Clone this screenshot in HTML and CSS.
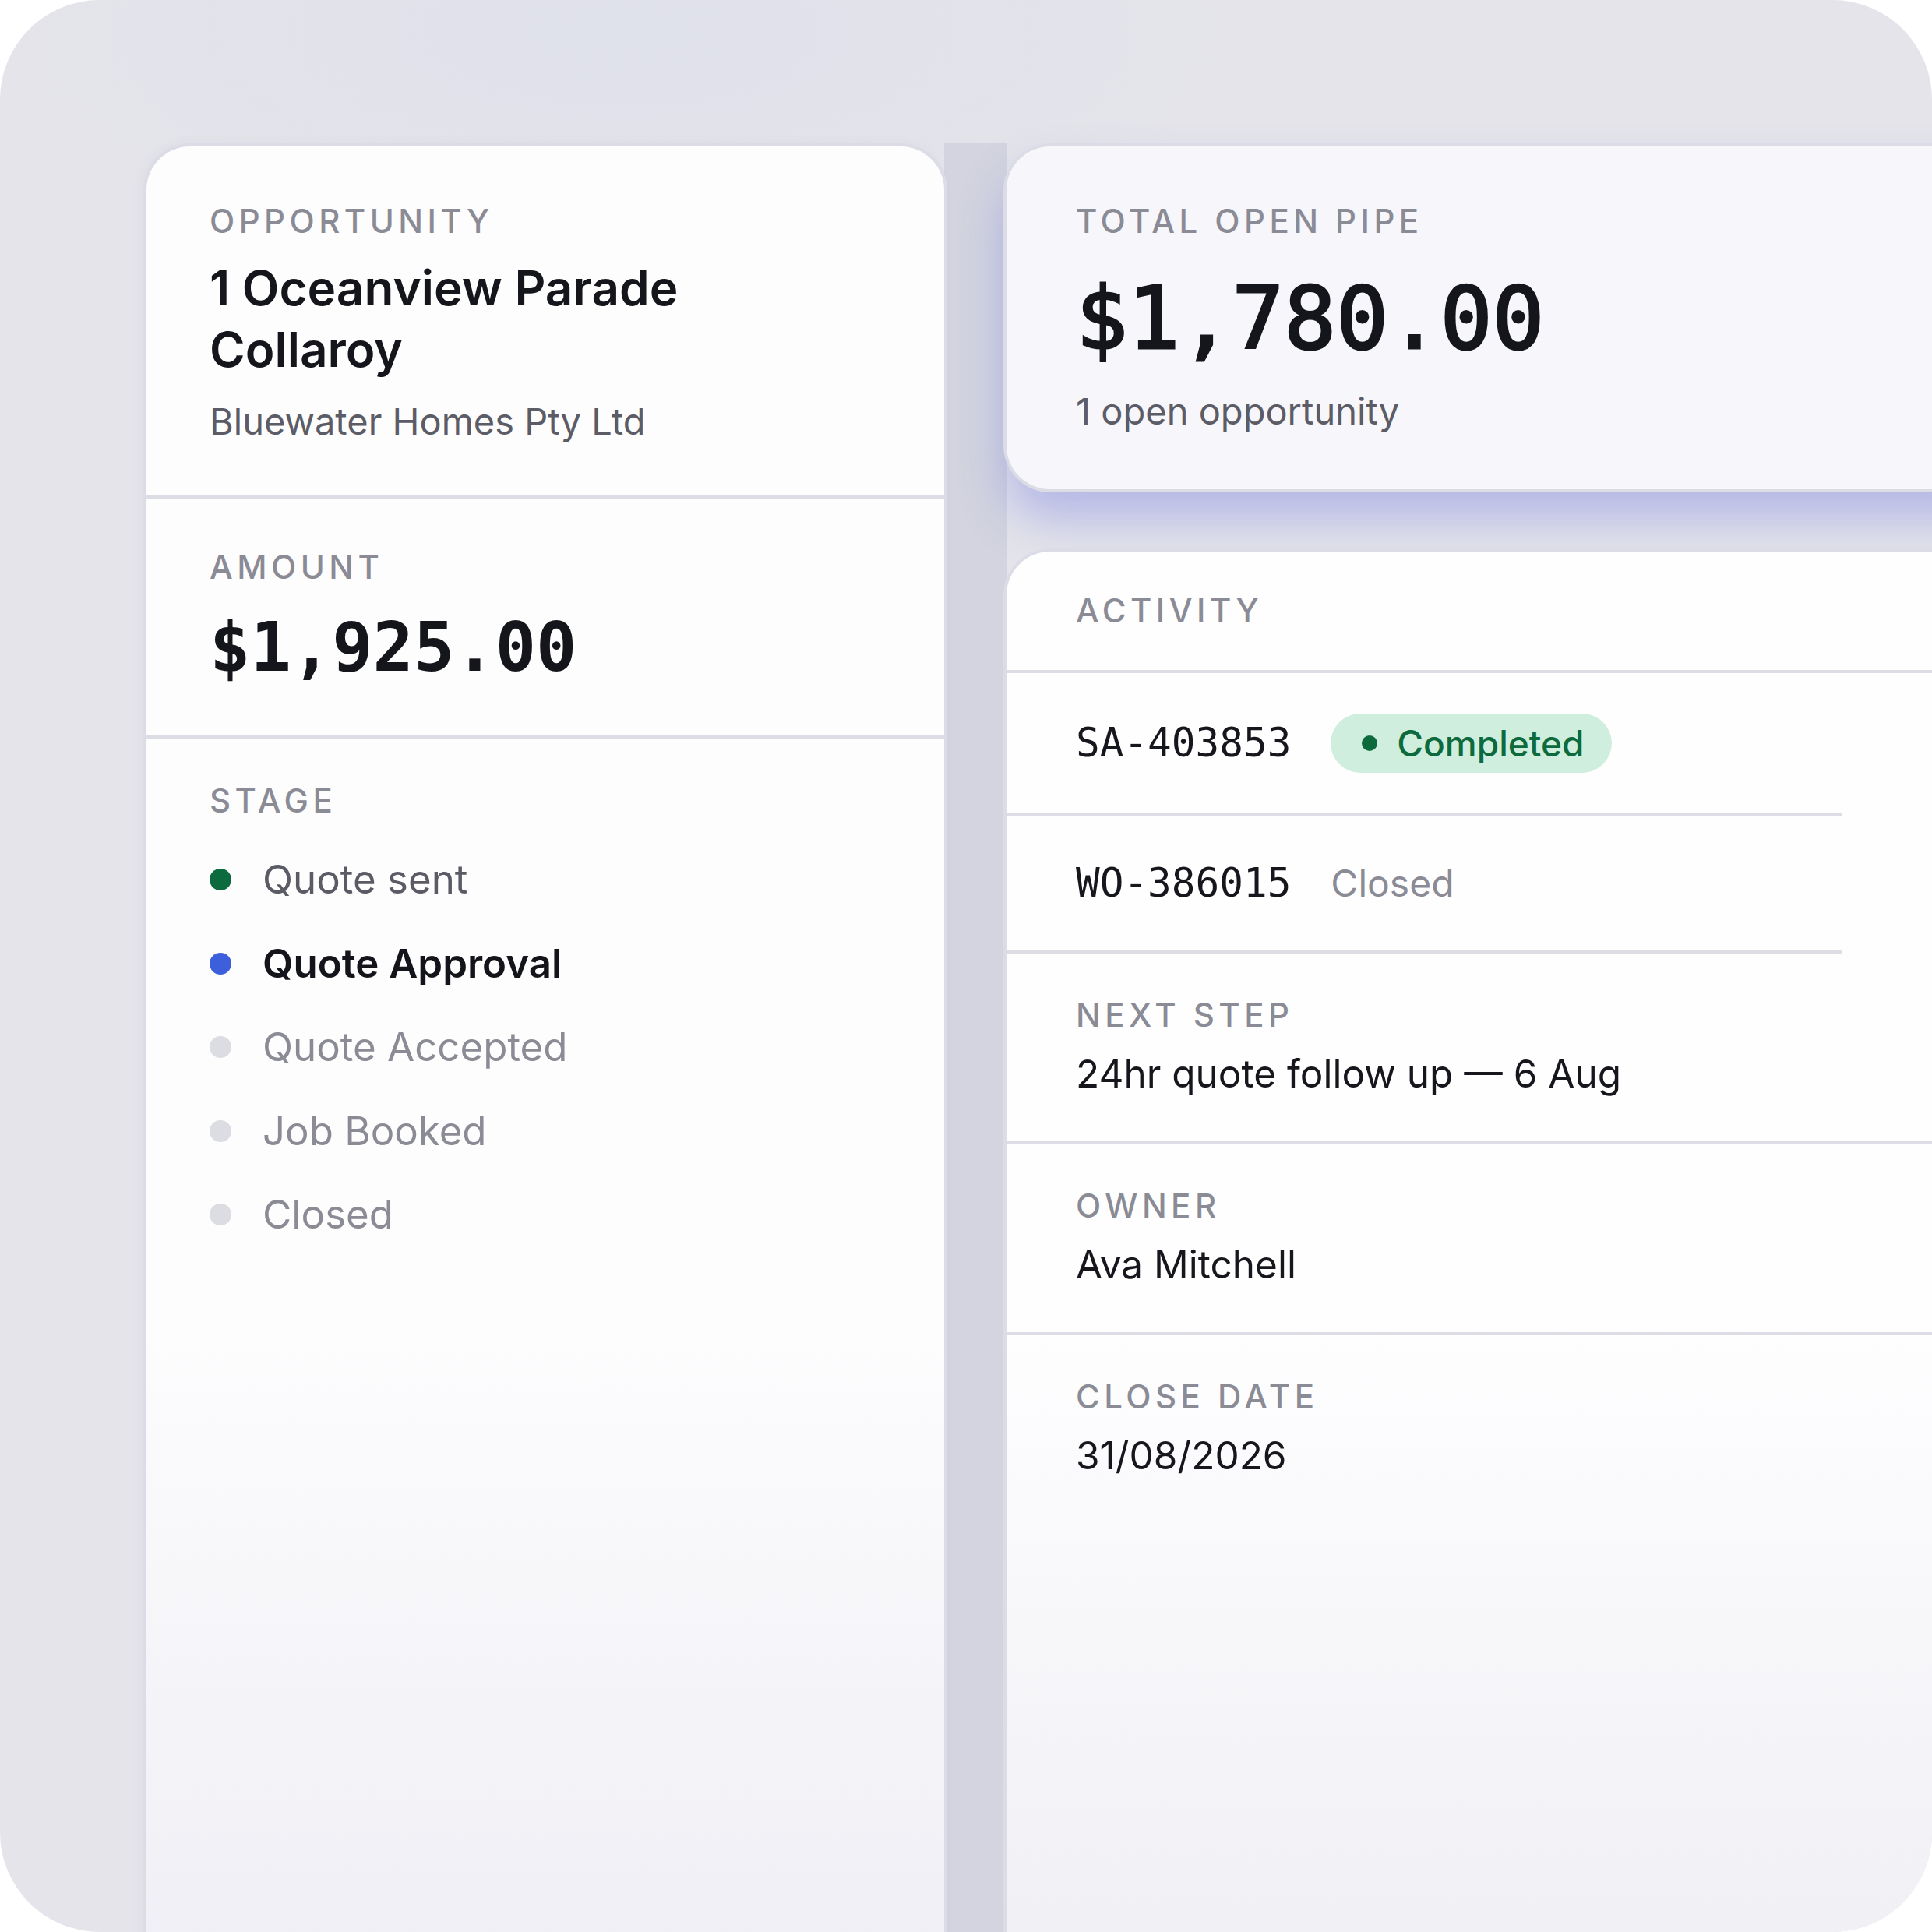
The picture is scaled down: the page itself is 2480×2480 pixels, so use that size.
FILE: index.html
```html
<!DOCTYPE html>
<html lang="en">
<head>
    <meta charset="UTF-8">
    <meta name="viewport" content="width=device-width, initial-scale=1.0">
    <title>Opportunity</title>
    <link rel="stylesheet" href="styles.css">
</head>
<body>
    <div class="frame">
        <div class="board">
            <section class="card deal">
                <div class="block block-head">
                    <div class="label">Opportunity</div>
                    <h1 class="title">1 Oceanview Parade Collaroy</h1>
                    <div class="sub">Bluewater Homes Pty Ltd</div>
                </div>
                <div class="block block-amount">
                    <div class="label">Amount</div>
                    <div class="money">$1,925.00</div>
                </div>
                <div class="block block-stage">
                    <div class="label">Stage</div>
                    <ul class="stages">
                        <li class="stage done"><span class="dot"></span>Quote sent</li>
                        <li class="stage current"><span class="dot"></span>Quote Approval</li>
                        <li class="stage"><span class="dot"></span>Quote Accepted</li>
                        <li class="stage"><span class="dot"></span>Job Booked</li>
                        <li class="stage"><span class="dot"></span>Closed</li>
                    </ul>
                </div>
            </section>

            <div class="side">
                <section class="card pipe">
                    <div class="label">Total open pipe</div>
                    <div class="money money-big">$1,780.00</div>
                    <div class="sub">1 open opportunity</div>
                </section>

                <section class="card activity">
                    <div class="activity-head">
                        <div class="label">Activity</div>
                    </div>
                    <ul class="jobs">
                        <li class="job">
                            <span class="job-id">SA-403853</span>
                            <span class="badge"><span class="badge-dot"></span>Completed</span>
                        </li>
                        <li class="job">
                            <span class="job-id">WO-386015</span>
                            <span class="job-status">Closed</span>
                        </li>
                    </ul>
                    <div class="field">
                        <div class="label">Next step</div>
                        <div class="value">24hr quote follow up — 6 Aug</div>
                    </div>
                    <div class="field">
                        <div class="label">Owner</div>
                        <div class="value">Ava Mitchell</div>
                    </div>
                    <div class="field field-last">
                        <div class="label">Close date</div>
                        <div class="value">31/08/2026</div>
                    </div>
                </section>
            </div>
        </div>
    </div>
</body>
</html>
```

FILE: styles.css
```css
body {
    margin: 0;
    background: #ffffff;
    font-family: Inter, "Noto Sans", sans-serif;
    color: #15151c;
}

.frame {
    width: 2480px;
    height: 2480px;
    border-radius: 128px;
    overflow: hidden;
    background:
        radial-gradient(ellipse 800px 300px at 800px 40px, rgba(218, 221, 236, 0.5), rgba(218, 221, 236, 0)),
        #e4e4ea;
}

/* the darker gutter between the two columns */
.board {
    display: grid;
    grid-template-columns: 1024px 1288px;
    column-gap: 80px;
    padding: 188px 0 0 188px;
    height: 2620px;
    box-sizing: border-box;
    background: linear-gradient(#d3d4df, #d3d4df) 1212px 184px / 80px 100% no-repeat;
}

.card {
    border-radius: 56px;
    overflow: hidden;
    box-shadow: 0 0 0 4px #dcdce6;
}

/* shared bits */
.label {
    font-size: 42px;
    line-height: 50px;
    font-weight: 500;
    letter-spacing: 0.13em;
    text-transform: uppercase;
    color: #8b8b96;
}

.sub {
    font-size: 47px;
    line-height: 56px;
    color: #5c5c67;
}

.money {
    font-family: "DejaVu Sans Mono", "Liberation Mono", monospace;
    font-weight: 700;
    font-size: 87px;
    line-height: 100px;
    color: #15151c;
}

/* left card */
.deal {
    background: linear-gradient(180deg, #fdfdfe 0, #fdfdfe 1500px, #efeff5 2300px);
    box-shadow: 0 0 0 4px #dcdce6, -4px 0 18px rgba(60, 64, 110, 0.06);
}

.block {
    padding: 0 81px;
    border-bottom: 4px solid #dddde5;
}

.block-head {
    padding-top: 71px;
    padding-bottom: 67px;
}

.title {
    margin: 21px 0 25px;
    max-width: 700px;
    font-size: 62px;
    line-height: 79px;
    font-weight: 600;
}

.block-amount {
    padding-top: 63px;
    padding-bottom: 63px;
}

.block-amount .money {
    margin-top: 28px;
}

.block-stage {
    padding-top: 55px;
    border-bottom: none;
}

.stages {
    list-style: none;
    margin: 44px 0 0;
    padding: 0;
    display: flex;
    flex-direction: column;
    gap: 43.5px;
}

.stage {
    display: flex;
    align-items: center;
    gap: 40px;
    font-size: 51px;
    line-height: 64px;
    color: #8b8b96;
}

.dot {
    width: 28px;
    height: 28px;
    border-radius: 50%;
    background: #dcdde3;
    flex-shrink: 0;
}

.stage.done {
    color: #5b5b66;
}

.stage.done .dot {
    background: #0b6b3e;
}

.stage.current {
    color: #14141b;
    font-weight: 600;
}

.stage.current .dot {
    background: #3e5fdc;
}

/* right column */
.side {
    display: flex;
    flex-direction: column;
    gap: 80px;
}

.pipe {
    height: 440px;
    box-sizing: border-box;
    padding: 71px 89px 0;
    background: #f6f6fb;
    box-shadow: 0 0 0 4px #dcdce6, 0 38px 60px rgba(88, 98, 222, 0.34);
}

.money-big {
    margin: 39px 0 30px;
    font-size: 111px;
    line-height: 122px;
    font-weight: 400;
    -webkit-text-stroke: 3px #15151c;
}

.activity {
    flex: 1;
    background: linear-gradient(180deg, #fefeff 0, #fefeff 1000px, #f0f0f5 1772px);
}

.activity-head {
    padding: 51px 89px;
    border-bottom: 4px solid #dddde5;
}

.jobs {
    list-style: none;
    margin: 0 216px 0 0;
    padding: 0;
}

.job {
    display: flex;
    align-items: center;
    gap: 51px;
    padding: 52px 0 52px 89px;
    border-bottom: 4px solid #dddde5;
}

.job-id {
    font-family: "DejaVu Sans Mono", "Liberation Mono", monospace;
    font-size: 51px;
    line-height: 68px;
    color: #16161d;
}

.job-status {
    font-size: 48px;
    line-height: 56px;
    color: #8b8b96;
}

.badge {
    display: inline-flex;
    align-items: center;
    gap: 25px;
    height: 76px;
    padding: 0 36px 0 40px;
    border-radius: 38px;
    background: #cfeedd;
    color: #0c6a3d;
    font-size: 46px;
    font-weight: 500;
}

.badge-dot {
    width: 20px;
    height: 20px;
    border-radius: 50%;
    background: #0c6a3d;
}

.field {
    padding: 54px 89px 57px;
    border-bottom: 4px solid #dddde5;
}

.field-last {
    border-bottom: none;
}

.value {
    margin-top: 20px;
    font-size: 49.5px;
    line-height: 60px;
    color: #16161d;
}
```
